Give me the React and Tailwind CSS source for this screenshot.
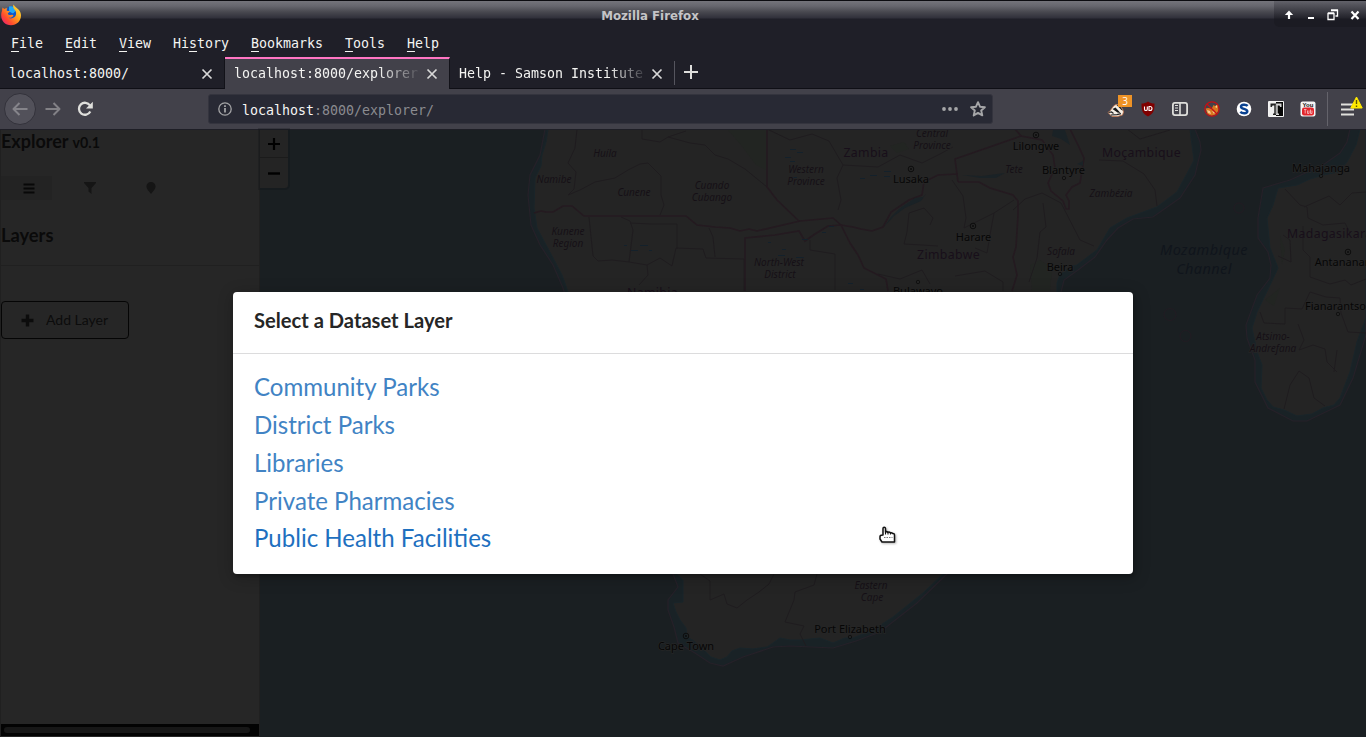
import React from "react";

const MENU = [
  ["", "F", "ile"],
  ["", "E", "dit"],
  ["", "V", "iew"],
  ["Hi", "s", "tory"],
  ["", "B", "ookmarks"],
  ["", "T", "ools"],
  ["", "H", "elp"],
];

const DATASETS = [
  "Community Parks",
  "District Parks",
  "Libraries",
  "Private Pharmacies",
];

function FirefoxLogo() {
  return (
    <svg width="22" height="22" viewBox="0 0 22 22" className="block">
      <defs>
        <linearGradient id="fox" x1="1" y1="0" x2="0" y2="1">
          <stop offset="0" stopColor="#fff044" />
          <stop offset="0.4" stopColor="#ffa41c" />
          <stop offset="0.7" stopColor="#ff4b2e" />
          <stop offset="1" stopColor="#e31587" />
        </linearGradient>
      </defs>
      <circle cx="11.5" cy="10" r="7.5" fill="#0a57c9" />
      <path d="M9 2.5c3-1 6 .5 7 4l-3 3-4-2z" fill="#1fa8f5" />
      <path
        d="M2.6 3.5l1.6 1.6C5 4.3 6.2 4 7.5 4.3 6.8 5 6.5 5.9 6.8 6.8l3 .5c.2.8-1.200 1.300-2 2 .1 1.600 1.700 2 3.300 1.700 1.300-.3 2-.2 2.400.6-1 1.900-2.900 2.500-4.900 2.200 2.600 1.600 6.700.2 7.400-3.200.4-2.100-.3-3.800-1.500-5.100C13 4.200 12.800 2.300 13.600.6c.9 2.500 3.500 3.300 5.100 5.200 1.500 1.700 2.300 3.800 2.300 5.700 0 5.500-4.300 9.700-10 9.700S1.200 16.900 1.200 11.400c0-2 .3-3.500.9-4.700-.1-1.100.1-2.200.5-3.200z"
        fill="url(#fox)"
      />
    </svg>
  );
}

function TitleBar() {
  return (
    <div className="flex h-[29px] border-t border-[#0b0b10] bg-[#1f1f28] bg-[linear-gradient(#74747b_0px,#66666e_5px,#48484f_11px,#30303a_17px,#1f1f28_18px)]">
      <div className="w-[570px] pt-[3px]">
        <FirefoxLogo />
      </div>
      <div className="w-[160px] pt-[6px] text-center font-['DejaVu_Sans'] text-[11.800px] font-bold leading-[19px] text-[#c4c4c6]">
        Mozilla Firefox
      </div>
      <div className="flex-1" />
      <div className="h-[26px] w-[92px] bg-[linear-gradient(#62626a_0px,#44444c_8px,#23232b_17px,#1b1b23_18px)] rounded-bl-[5px]">
        <svg width="91" height="25" viewBox="0 0 91 25" fill="none" stroke="#fff">
          <path d="M15 18v-6" strokeWidth="2.200" />
          <path d="M10.800 14l4.200-4.500 4.200 4.500z" fill="#fff" stroke="none" />
          <path d="M34 17h6" strokeWidth="2" />
          <path d="M57 9.500h6.500v5.500h-2M54 12.500h6v6h-6zM57 9h7M54 12h6" strokeWidth="1.300" />
          <path d="M77.500 10.500l7 7.500M84.500 10.500l-7 7.500" strokeWidth="2.200" />
        </svg>
      </div>
    </div>
  );
}

function Close() {
  return (
    <svg width="12" height="12" viewBox="0 0 12 12" stroke="#d8d8d8" strokeWidth="1.700" className="block">
      <path d="M1.500 1.500l9 9M10.500 1.500l-9 9" />
    </svg>
  );
}

function Tab({ title, active, fade }) {
  return (
    <div
      className={
        "flex h-full items-center border-r border-[#121219] pr-[10px] pl-[9px] w-[225px] " +
        (active
          ? "border-t-2 border-t-[#ff75c3] bg-[#42414a]"
          : "border-b border-b-[#0f0f16] bg-[#1f1f28] pt-[3px]")
      }
    >
      <div
        className={
          "w-[184px] overflow-hidden whitespace-pre " +
          (fade ? "[mask-image:linear-gradient(to_right,black_145px,transparent_188px)]" : "")
        }
      >
        {title}
      </div>
      <div className="ml-[8px]">
        <Close />
      </div>
    </div>
  );
}

function Extensions() {
  return (
    <div className="flex items-center">
      <div className="relative flex w-8 justify-center">
        <svg width="18" height="18" viewBox="0 0 18 18">
          <path d="M1 12.500c2-1 3-3 4.500-5C7 5 9 4 11 5c3 1 5 4 5.500 7l-1 3-5 1.500H5z" fill="#f5efe6" stroke="#c6754a" strokeWidth=".8" />
          <path d="M5.500 9l5 3.500 3 .5-5-5.500zM9.500 5l5 5 1.500.5-3.500-5z" fill="#171717" />
          <path d="M1.500 12.500l3-.5 2 1.500M4 15l6-.3 4-1" fill="none" stroke="#222" strokeWidth="1.200" />
        </svg>
        <div className="absolute -top-[5px] left-[18px] h-3 w-[14px] bg-[#ee9327] text-center font-['Open_Sans'] text-[10px] leading-3 text-white">
          3
        </div>
      </div>
      <div className="flex w-8 justify-center">
        <svg width="16" height="16" viewBox="0 0 16 16">
          <path d="M8 .5c2 1.500 4 2 6.500 2 0 6-.5 10-6.500 13C2 12.500 1.500 8.500 1.500 2.500 4 2.500 6 2 8 .5z" fill="#800000" />
          <path d="M4.500 5.500v2.700q0 1.300 1.400 1.300t1.400-1.300V5.500M9 5.500h1a2 2 0 010 4H9z" fill="none" stroke="#fff" strokeWidth="1.100" />
        </svg>
      </div>
      <div className="flex w-8 justify-center">
        <svg width="16" height="14" viewBox="0 0 16 14" fill="none" stroke="#dededb">
          <rect x=".9" y=".9" width="14.200" height="12.200" rx="2" strokeWidth="1.800" />
          <path d="M8 1v12" strokeWidth="1.600" />
          <path d="M3 3.500h3M3 6h3M3 8.500h3" strokeWidth="1.100" />
        </svg>
      </div>
      <div className="flex w-8 justify-center">
        <svg width="16" height="16" viewBox="0 0 16 16">
          <path d="M1.500 7.500l3-.5 3 1 2-4 1.500 1L14 3l.5 6-2 4-5 2-4-2z" fill="#d9761f" />
          <path d="M3 9l3 1 1 3-3-1zM11 6l2-2v3zM8 10l3 1-1 2z" fill="#f7c68f" />
          <circle cx="8" cy="8" r="7.200" fill="none" stroke="#c50f14" strokeWidth="1.200" />
          <path d="M3 3l10 10" stroke="#c50f14" strokeWidth="1.300" />
        </svg>
      </div>
      <div className="flex w-8 justify-center">
        <svg width="16" height="16" viewBox="0 0 16 16">
          <circle cx="8" cy="8" r="7.300" fill="#fff" />
          <path d="M11.700 4.900C10 3.200 5 3.200 5 5.700 5 8.300 11.300 7.400 11.300 10.300c0 2.600-5 2.500-7 .6" fill="none" stroke="#0a4291" strokeWidth="2.500" />
        </svg>
      </div>
      <div className="flex w-8 justify-center">
        <svg width="16" height="16" viewBox="0 0 16 16">
          <path d="M.5.500h15v15H.5z" fill="#060606" stroke="#f4f4f4" />
          <path d="M1 1h7v14H1z" fill="#eee" />
          <path d="M2.500 2.500H8V14H5v-1.300l1.300-.5V4.500H4.600L3.800 6H2.500z" fill="#222" />
          <path d="M8 2.500h5.500V6h-1.300l-.8-1.500H9.700v7.700l1.300.5V14H8z" fill="#d6d6d6" />
          <path d="M8 3.500v9.500" stroke="#888" />
        </svg>
      </div>
      <div className="flex w-8 justify-center">
        <svg width="16" height="16" viewBox="0 0 16 16">
          <rect x=".5" y=".5" width="15" height="15" rx="2" fill="#f4f4f4" />
          <rect x="2" y="6.500" width="12" height="8" rx="2" fill="#e2252b" />
          <text x="8" y="6" textAnchor="middle" fontFamily="Liberation Sans" fontWeight="700" fontSize="6" fill="#111">You</text>
          <path d="M4 8.500h2.500M5.200 8.500v4M7.500 9.500v3h1.500v-3M10.500 8.500v4h1.500v-3" fill="none" stroke="#f6b8ba" strokeWidth=".9" />
        </svg>
      </div>
    </div>
  );
}

function NavBar() {
  return (
    <div className="flex h-[41px] items-center border-b border-[#1e1e26] bg-[#42414a]">
      <div className="ml-1 flex size-8 items-center justify-center rounded-full border border-[#33323b] bg-[#52515a]">
        <svg width="16" height="14" viewBox="0 0 16 14" fill="none" stroke="#85848a" strokeWidth="2" className="block">
          <path d="M15.500 7H1.500M7.500 1l-6 6 6 6" strokeLinejoin="round" />
        </svg>
      </div>
      <svg width="16" height="14" viewBox="0 0 16 14" fill="none" stroke="#828186" strokeWidth="2" className="ml-[9px] block">
        <path d="M.5 7h14M8.500 1l6 6-6 6" strokeLinejoin="round" />
      </svg>
      <svg width="17" height="16" viewBox="0 0 17 16" className="ml-[16px] block">
        <path d="M13.300 10.500A6 6 0 1113 4.500" fill="none" stroke="#dfdfdc" strokeWidth="2.300" />
        <path d="M9 7.500h6.800V.8z" fill="#dfdfdc" />
      </svg>
      <div className="ml-[114px] flex h-[30px] w-[785px] items-center rounded-[3px] border border-[#34343e] bg-[#282934] pr-[6px] pl-[9px]">
        <svg width="14" height="14" viewBox="0 0 14 14" fill="none" stroke="#a4a4a6" className="block">
          <circle cx="7" cy="7" r="6.200" strokeWidth="1.300" />
          <path d="M7 6v4.500M7 3.300v1.700" strokeWidth="1.800" />
        </svg>
        <div className="mt-[3px] ml-[10px] flex-1 text-[#8b8b90]">
          <span className="text-[#f6f6f4]">localhost</span>:8000/explorer/
        </div>
        <svg width="18" height="4" viewBox="0 0 18 4" fill="#a6a6a8" className="block">
          <circle cx="2" cy="2" r="1.900" />
          <circle cx="8" cy="2" r="1.900" />
          <circle cx="14" cy="2" r="1.900" />
        </svg>
        <svg width="16" height="16" viewBox="0 0 16 16" fill="none" stroke="#a6a6a8" strokeWidth="1.900" strokeLinejoin="round" className="ml-[10px] block">
          <path d="M8 1.200l2 4.500 4.900.5-3.700 3.300 1.100 4.900L8 11.900l-4.300 2.500 1.100-4.900L1.100 6.200 6 5.700z" />
        </svg>
      </div>
      <div className="ml-[107px]">
        <Extensions />
      </div>
      <div className="ml-[3px] h-[34px] w-px bg-[#64636b]" />
      <div className="relative ml-[13px]">
        <svg width="13" height="13" viewBox="0 0 13 13" stroke="#e0e0dc" strokeWidth="2" className="block">
          <path d="M0 1.500h13M0 6.500h13M0 11.500h13" />
        </svg>
        <svg width="13" height="13" viewBox="0 0 13 13" className="absolute -top-[7px] left-[9px]">
          <path d="M6.500 1l5.700 11H.8z" fill="#ffe900" stroke="#ffe900" strokeLinejoin="round" />
          <path d="M6.500 4v4M6.500 9.500v1.500" stroke="#5d5500" strokeWidth="1.400" />
        </svg>
      </div>
    </div>
  );
}

const AFRICA =
  "M548 129L546 142 542 155 541 166 535 178 534 208 537 228 545 243 553 258 562 275 568 292 600 400 650 530 677 574 683 580 683 602 673 603 676 612 680 620 686 628 687 637 694 641 707 653 711 657 720 660 727 657 732 651 740 648 753 649 767 647 773 643 780 638 790 640 800 640 810 639 820 638 833 643 845 638 853 638 873 630 893 617 908 605 923 593 943 574 980 500 1057 400 1057 292 1057 283 1060 275 1070 267 1077 265 1097 250 1110 228 1127 218 1157 207 1177 192 1190 168 1194 160 1192 145 1190 129Z";
const AFRICA_EDGE =
  "M545 129L540 155 530 175 528 195 531 225 540 245 553 265 563 288 595 400 645 530 673 574 678 587 668 600 668 610 674 627 678 643 695 653 710 663 723 666 743 657 773 647 790 646 833 648 856 641 880 632 917 603 947 574 1010 480 1063 400 1061 292 1064 280 1078 270 1095 257 1107 240 1118 228 1133 219 1153 217 1180 198 1195 175 1201 150 1200 142 1195 129Z";
const MADAGASCAR =
  "M1360 129L1356 145 1347 162 1338 172 1323 175 1310 179 1297 185 1278 188 1273 205 1267 218 1270 248 1278 268 1270 285 1257 312 1252 328 1257 352 1262 365 1261 388 1267 400 1273 407 1284 410 1297 416 1312 414 1323 408 1334 405 1340 398 1350 372 1357 342 1366 318V129Z";
const MADAGASCAR_EDGE =
  "M1350 129L1347 142 1340 153 1323 165 1290 180 1263 188 1258 218 1258 238 1268 252 1271 265 1270 278 1257 295 1246 325 1247 338 1255 360 1255 382 1268 408 1293 421 1307 421 1340 405 1353 378 1366 335V129Z";

const REGION_BORDERS = [
  "M577 129L575 148 568 163 576 172 574 189 568 195 580 190 595 182 615 178 628 170 640 164 648 163 661 176 661 195 664 205 660 215",
  "M642 129V139L660 142 668 137 686 131M668 137L690 143 705 145 715 155 728 159 745 169 767 187",
  "M589 217L593 256 598 261 612 260 629 262 633 230 630 221 621 217M629 262L647 265 660 258 672 266 676 248 703 249 706 258 744 259",
  "M630 223L651 224H677V249M715 257L713 237 709 228M647 265L648 275 639 285M744 259V291M810 240V250L835 254V290",
  "M767 129L790 140 812 134 829 141 843 165 837 178 841 200 838 210M843 165L878 167 900 155 922 163 940 154 953 147",
  "M952 180L963 196 966 218 964 228 994 213 1014 200M907 232L904 244 922 245 938 246M907 232L909 213 924 208 933 218 930 225",
  "M994 213L990 235 987 253 975 248M878 274L900 279 922 270 930 284M955 276L985 271 1003 282V291",
  "M1013 210L1025 199 1042 193 1061 203 1080 240 1094 246M1029 282L1037 258 1040 232 1046 227 1043 203",
  "M1099 160L1123 161 1144 174 1155 190 1157 206M1127 129L1140 139 1170 130",
  "M700 574L710 581 710 600 724 594 727 604 737 608 747 600 759 592 769 584 774 574",
  "M817 574L814 585 795 592 794 600 785 622 804 626 800 634 806 646",
];
const MADAGASCAR_BORDERS = [
  "M1285 189L1300 205 1307 207 1308 218 1323 225 1345 223 1350 233M1304 207L1329 196 1340 205 1352 193 1366 192",
  "M1278 256L1291 262 1290 240 1283 235M1303 226V250L1310 257V277L1330 284 1345 280 1351 285 1366 279",
  "M1260 312L1264 323 1285 324V308L1302 309 1310 292 1326 297 1340 298 1341 313 1348 332 1366 333",
  "M1298 324L1304 340 1299 350 1313 345 1325 349 1327 362 1337 372M1284 409L1290 385 1299 371 1309 378 1314 398 1325 406M1337 350L1334 372",
];
const COUNTRY_BORDERS = [
  "M534 213L541 211 546 212 553 212 563 206 572 206 584 216H686L697 225 715 227 730 228 740 231 749 229 757 231 800 221 833 218 841 225 853 227 861 229 872 231 883 227 891 212 909 200 922 195 924 182 938 175 958 174",
  "M767 129V187L777 200 799 221M745 291V238L775 235 799 231 805 241 815 234 828 226 841 225 850 243 858 255 864 268 886 279 888 291",
  "M958 182L955 159 1021 136 1015 129M958 182H979L990 188 1013 195 1018 201 1018 215 1016 247 1013 257 1017 275 1012 291",
  "M1021 136L1042 140 1053 155 1055 168 1048 183 1051 191 1063 201 1066 209H1069V201L1066 195 1072 187 1080 183 1084 158 1078 145 1070 129",
];

const PLACES = [
  [605, 157, "Huíla"],
  [554, 183, "Namibe"],
  [634, 196, "Cunene"],
  [712, 189, "Cuando"],
  [712, 201, "Cubango"],
  [568, 235, "Kunene"],
  [568, 247, "Region"],
  [779, 266, "North-West"],
  [780, 278, "District"],
  [806, 173, "Western"],
  [806, 185, "Province"],
  [932, 137, "Central"],
  [932, 149, "Province"],
  [1014, 173, "Tete"],
  [1111, 197, "Zambézia"],
  [1061, 255, "Sofala"],
  [1273, 340, "Atsimo-"],
  [1273, 352, "Andrefana"],
  [871, 589, "Eastern"],
  [872, 601, "Cape"],
];
const CITIES = [
  [911, 183, "Lusaka"],
  [1036, 150, "Lilongwe"],
  [1063.5, 174, "Blantyre"],
  [973.5, 240.5, "Harare"],
  [1060, 271, "Beira"],
  [918, 295, "Bulawayo"],
  [1321, 172, "Mahajanga"],
  [1349.5, 266, "Antananarivo"],
  [1338.5, 310, "Fianarantsoa"],
  [686, 650, "Cape Town"],
  [850, 632.5, "Port Elizabeth"],
];
const COUNTRIES = [
  [866, 157, "Zambia"],
  [948.5, 259, "Zimbabwe"],
  [1141.5, 157, "Moçambique"],
  [652.5, 297, "Namibia"],
];
const CAPITALS = [[911, 169], [1036, 135], [973, 226], [1348, 252], [686, 636]];
const TOWNS = [[1064, 178], [1060, 274], [918, 282], [1338, 314], [850, 637], [1321, 176]];

function MapView() {
  return (
    <svg viewBox="260 130 1106 607" width="1106" height="607" className="block" fontFamily="'Noto Sans', sans-serif">
      <rect x="260" y="129" width="1106" height="608" fill="#1a1f22" />
      <g fill="#192226" stroke="#262129" strokeWidth="1.200">
        <path d={AFRICA_EDGE} />
        <path d={MADAGASCAR_EDGE} />
      </g>
      <g fill="#242424" stroke="#19252a" strokeWidth="1">
        <path d={AFRICA} />
        <path d={MADAGASCAR} />
      </g>
      <g fill="#222522">
        <path d="M728 130l38 0 0 40-10-5-15-20zM890 146l14-4 5 7-12 4zM1030 265l10-5 12 8-2 23-18 0zM1280 235l5 15-3 15zM1265 300l15-12-6 18z" />
      </g>
      <g fill="none" stroke="#1f1c1f" strokeWidth="1">
        {REGION_BORDERS.map((d) => <path key={d} d={d} />)}
        {MADAGASCAR_BORDERS.map((d) => <path key={d} d={d} />)}
      </g>
      <g fill="none" stroke="#241a20" strokeWidth="1.600">
        {COUNTRY_BORDERS.map((d) => <path key={d} d={d} />)}
      </g>
      <path d="M884 227l7-10 9-9 15-10 8-1 3-3-5 7-16 7-11 8zM962 175l20 1 15-2 8-1-9 5-16 0zM1053 130l12 0 5 15-9-6-9-3zM1077 164l6-3 0 5z" fill="#1a2226" />
      <g stroke="#14212b" strokeWidth="1" fill="none">
        <path d="M790 149.500h6M797 152.500h6M785 157.500h6M790 161.500h5M624 245.500h3M640 245.500h8M631 250.500h7M649 250.500h3M768 242.500h3M782 249.500h4M778 255.500h7M796 257.500h8M792 177.500h5M860 178.500h5M870 175.500h7M884 171.500h7M884 176.500h6M829 226.500h5M822 232.500h4M802 239.500h6M848 283.500h5M860 289.500h4" />
      </g>
      <g fill="none" stroke="#221c22" strokeWidth="1">
        <circle cx="1239" cy="208" r="5" />
        <circle cx="1170" cy="314.500" r="6" />
        <circle cx="1185.500" cy="336" r="5.500" />
      </g>
      <g fontSize="14.500" fontStyle="italic" fill="#10151c" textAnchor="middle" letterSpacing=".4">
        <text x="1204" y="255">Mozambique</text>
        <text x="1204" y="273.500">Channel</text>
      </g>
      <g fontSize="10" fontStyle="italic" fill="#151016" textAnchor="middle" stroke="#252525" strokeWidth="1.500" paintOrder="stroke">
        {PLACES.map(([x, y, label]) => <text key={`${label}${x}${y}`} x={x} y={y}>{label}</text>)}
      </g>
      <g fontSize="12.300" fill="#180f1a" textAnchor="middle" letterSpacing=".35">
        {COUNTRIES.map(([x, y, label]) => <text key={label} x={x} y={y}>{label}</text>)}
        <text x="1287" y="238" textAnchor="start">Madagasikara</text>
      </g>
      <g fill="none" stroke="#0d0d0d">
        {CAPITALS.map(([x, y]) => (
          <g key={x}>
            <circle cx={x} cy={y} r="2.800" />
            <circle cx={x} cy={y} r="1" fill="#0d0d0d" stroke="none" />
          </g>
        ))}
        {TOWNS.map(([x, y]) => <circle key={x} cx={x} cy={y} r="1.700" strokeWidth=".8" />)}
      </g>
      <g fontSize="11" fill="#060606" textAnchor="middle" stroke="#262626" strokeWidth="1.300" paintOrder="stroke">
        {CITIES.map(([x, y, label]) => <text key={label} x={x} y={y}>{label}</text>)}
      </g>
    </svg>
  );
}

function Sidebar() {
  return (
    <aside className="flex w-[260px] flex-col border-x border-[#202020] bg-[#262626] text-[#0a0a0a]">
      <h1 className="-mt-px h-[23px] text-[18px] font-bold leading-6">
        Explorer <span className="text-[14.200px]">v0.1</span>
      </h1>
      <div className="mt-[24px] flex h-6 w-[184px] items-center">
        <div className="flex h-6 w-[51px] items-center justify-center bg-[#232323] pl-1">
          <svg width="12" height="11" viewBox="0 0 12 11" stroke="#080808" strokeWidth="1.800" className="block">
            <path d="M0.500 1.500h11M0.500 5.500h11M0.500 9.500h11" />
          </svg>
        </div>
        <svg width="12" height="12" viewBox="0 0 12 12" className="ml-8 block" fill="#151515">
          <path d="M0 0h12v1L7.500 6v6L4.500 9.500V6L0 1z" />
        </svg>
        <svg width="10" height="12" viewBox="0 0 10 12" className="ml-[50px] block" fill="#151515">
          <path d="M5 0a4.600 4.600 0 014.600 4.600C9.600 7 7 9.500 5 12 3 9.500.4 7 .4 4.600A4.600 4.600 0 015 0z" />
        </svg>
      </div>
      <h2 className="mt-[23px] h-6 text-[18.300px] font-bold leading-6">Layers</h2>
      <div className="mt-[18px] h-px bg-[#202020]" />
      <button className="mt-[35px] flex h-[38px] w-32 items-center rounded border border-[#050505] pl-[19px] text-[14px] text-[#0c0c0c]">
        <svg width="13" height="13" viewBox="0 0 13 13" className="mr-[12px] block">
          <path d="M6.500.5v12M.5 6.500h12" stroke="#0c0c0c" strokeWidth="3.400" />
        </svg>
        Add Layer
      </button>
      <div className="flex-1" />
      <div className="mb-px h-3 bg-[#030303] px-[3px] pt-[3px]">
        <div className="h-[6px] w-[246px] rounded-full bg-[#171717]" />
      </div>
    </aside>
  );
}

function Cursor() {
  return (
    <svg width="18" height="18" viewBox="0 0 18 18" className="absolute top-[234px] left-[646px] drop-shadow-[1px_1px_1px_rgba(0,0,0,.3)]">
      <path
        d="M4 9V2.500q0-1.300 1.200-1.300T6.500 2.500V6q1-.9 2.500.3 1.300-.6 2.500.6 1.400-.4 2.200.7 1.800-.3 1.800 1.600V16H3L1 13v-2.500Q1 9 4 9z"
        fill="#fff"
        stroke="#111"
        strokeWidth="1.500"
        strokeLinejoin="round"
      />
      <path d="M6.500 6v2.500M9 6.500v2M11.500 7v1.500" stroke="#111" strokeWidth="1.100" />
      <path d="M5 11.500h1.500M7.500 11.500H9M10 11.500h1.500M12.500 11.500h1" stroke="#777" />
    </svg>
  );
}

export default function App() {
  return (
    <div className="flex h-[737px] w-[1366px] flex-col overflow-hidden bg-[#1f1f28] font-['DejaVu_Sans_Mono'] text-[13.290px] leading-5 text-[#f4f4f2]">
      <TitleBar />
      <nav className="flex h-7 gap-[22px] pt-[5px] pl-[11px]">
        {MENU.map(([before, key, after]) => (
          <span key={key + after}>
            {before}
            <span className="underline decoration-1 underline-offset-[3px]">{key}</span>
            {after}
          </span>
        ))}
      </nav>
      <div className="flex h-8 bg-[#1f1f28]">
        <Tab title="localhost:8000/" />
        <Tab title="localhost:8000/explorer/" active fade />
        <div className="flex flex-1 border-b border-[#0f0f16] pt-[3px]">
          <div className="flex w-[224px] items-center pr-[10px] pl-[9px]">
            <div className="w-[184px] overflow-hidden whitespace-pre [mask-image:linear-gradient(to_right,black_150px,transparent_190px)]">
              Help - Samson Institute
            </div>
            <div className="ml-[8px]">
              <Close />
            </div>
          </div>
          <div className="mt-px h-6 w-px bg-[#55555e]" />
          <svg width="14" height="14" viewBox="0 0 14 14" stroke="#dededc" strokeWidth="2" className="mt-[5px] ml-[9px] block">
            <path d="M7 0v14M0 7h14" />
          </svg>
        </div>
      </div>
      <NavBar />
      <main className="relative flex h-[607px] font-['Lato']">
        <Sidebar />
        <MapView />
        <div className="absolute top-0 left-[260px] w-[28px] rounded-br-[3px] bg-[#242424] shadow-[0_0_0_2px_rgba(10,14,16,.22)]">
          <div className="flex h-[28px] items-center justify-center border-b border-[#1b1b1b]">
            <svg width="12" height="12" viewBox="0 0 12 12" stroke="#000" strokeWidth="2.200">
              <path d="M6 0v12M0 6h12" />
            </svg>
          </div>
          <div className="flex h-[30px] items-center justify-center">
            <svg width="12" height="12" viewBox="0 0 12 12" stroke="#000" strokeWidth="2.400">
              <path d="M0 6.500h12" />
            </svg>
          </div>
        </div>
        <section className="absolute top-[162px] left-[233px] h-[282px] w-[900px] rounded bg-white shadow-[1px_3px_3px_0_rgba(0,0,0,.2),1px_3px_15px_2px_rgba(0,0,0,.2)]">
          <h2 className="h-[62px] border-b border-[#dcdcdd] pt-[15px] pl-[21px] text-[20.150px] font-bold leading-[26px] text-[#262626]">
            Select a Dataset Layer
          </h2>
          <ul className="pt-[14px] pl-[21px] text-[24.050px] leading-[38px] text-[#4183c4]">
            {DATASETS.map((name) => (
              <li key={name} className="h-[38px]">{name}</li>
            ))}
            <li className="-mt-px h-[38px] text-[#1e70bf]">Public Health Facilities</li>
          </ul>
          <Cursor />
        </section>
      </main>
    </div>
  );
}
